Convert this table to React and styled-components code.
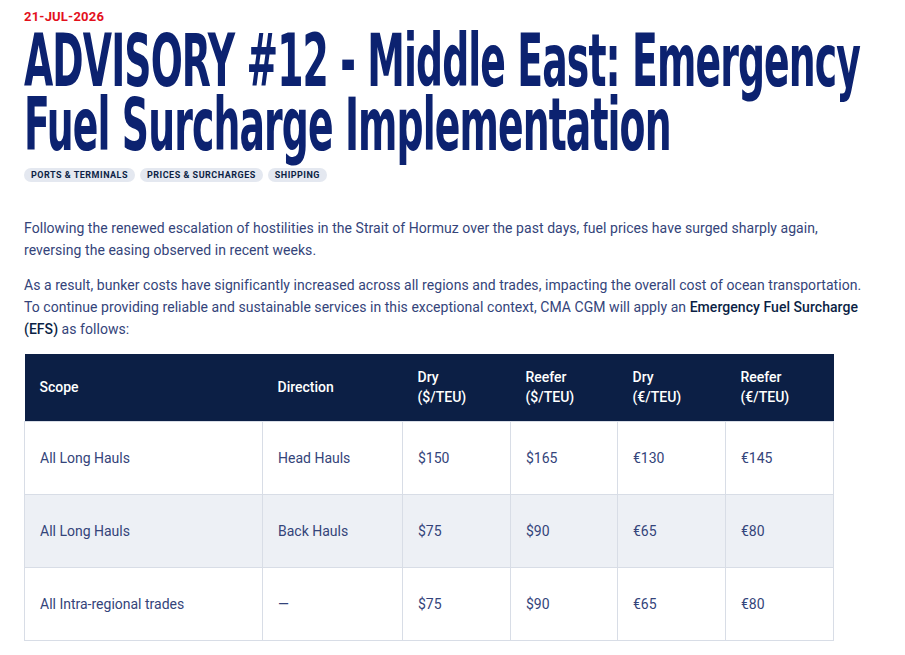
import React from "react";
import styled, { createGlobalStyle } from "styled-components";

const Global = createGlobalStyle`
  html, body { margin: 0; padding: 0; background: #fff; }
  body { font-family: Roboto, "Noto Sans", sans-serif; }
`;

const Page = styled.main`
  padding: 9px 35px 16px 24px;
  box-sizing: border-box;
  width: 905px;
`;

const DateLine = styled.div`
  color: #e3101c;
  font-family: Roboto, sans-serif;
  font-weight: 700;
  font-size: 13px;
  line-height: 16px;
  letter-spacing: 0.2px;
`;

const Title = styled.h1`
  margin: 6px -30px 64px 0;
  color: #0c2270;
  font-family: "DejaVu Sans Condensed", "Liberation Sans", sans-serif;
  font-weight: 700;
  font-size: 42px;
  line-height: 36.6px;
  letter-spacing: -0.9px;
  transform: scaleY(1.72);
  transform-origin: top left;
`;

const Tags = styled.div`
  display: flex;
  gap: 5px;
`;

const Tag = styled.span`
  display: inline-block;
  background: #e4e8f0;
  color: #0c1f45;
  font-family: Roboto, sans-serif;
  font-weight: 700;
  font-size: 9px;
  line-height: 14px;
  padding: 0 7px;
  border-radius: 8px;
  letter-spacing: 0.5px;
`;

const Body = styled.div`
  margin-top: 35px;
`;

const Para = styled.p`
  margin: 0 0 13px;
  color: #34447a;
  font-family: Roboto, sans-serif;
  font-size: 14px;
  line-height: 22px;
  letter-spacing: 0.05px;
`;

const Strong = styled.strong`
  color: #0c1f45;
  font-weight: 500;
`;

const Table = styled.table`
  width: 809px;
  border-collapse: collapse;
  margin-top: 14px;
  table-layout: fixed;
  font-family: Roboto, sans-serif;
  font-size: 14px;
`;

const Th = styled.th`
  background: #0c1f45;
  color: #fff;
  font-weight: 500;
  text-align: left;
  vertical-align: middle;
  padding: 0 15px;
  height: 67px;
  line-height: 20px;
  box-sizing: border-box;
`;

const Tr = styled.tr`
  background: ${(p) => (p.$alt ? "#edf0f5" : "#fff")};
`;

const Td = styled.td`
  border: 1px solid #d8dde6;
  color: #34447a;
  padding: 0 15px;
  height: 73px;
  vertical-align: middle;
  line-height: 20px;
  box-sizing: border-box;
`;

const cols = [238, 140, 108, 107, 108, 108];
const headers = [
  ["Scope"],
  ["Direction"],
  ["Dry", "($/TEU)"],
  ["Reefer", "($/TEU)"],
  ["Dry", "(€/TEU)"],
  ["Reefer", "(€/TEU)"],
];
const rows = [
  ["All Long Hauls", "Head Hauls", "$150", "$165", "€130", "€145"],
  ["All Long Hauls", "Back Hauls", "$75", "$90", "€65", "€80"],
  ["All Intra-regional trades", "—", "$75", "$90", "€65", "€80"],
];

export default function App() {
  return (
    <>
      <Global />
      <Page>
        <DateLine>21-JUL-2026</DateLine>
        <Title>ADVISORY #12 - Middle East: Emergency Fuel Surcharge Implementation</Title>
        <Tags>
          <Tag>PORTS &amp; TERMINALS</Tag>
          <Tag>PRICES &amp; SURCHARGES</Tag>
          <Tag>SHIPPING</Tag>
        </Tags>
        <Body>
          <Para>
            Following the renewed escalation of hostilities in the Strait of Hormuz over the past days, fuel prices have surged sharply again, reversing the easing observed in recent weeks.
          </Para>
          <Para>
            As a result, bunker costs have significantly increased across all regions and trades, impacting the overall cost of ocean transportation. To continue providing reliable and sustainable services in this exceptional context, CMA CGM will apply an <Strong>Emergency Fuel Surcharge (EFS)</Strong> as follows:
          </Para>
          <Table>
            <colgroup>
              {cols.map((w, i) => (
                <col key={i} style={{ width: w }} />
              ))}
            </colgroup>
            <thead>
              <tr>
                {headers.map((h, i) => (
                  <Th key={i}>
                    {h.map((l, j) => (
                      <React.Fragment key={j}>
                        {j > 0 && <br />}
                        {l}
                      </React.Fragment>
                    ))}
                  </Th>
                ))}
              </tr>
            </thead>
            <tbody>
              {rows.map((r, i) => (
                <Tr key={i} $alt={i === 1}>
                  {r.map((c, j) => (
                    <Td key={j}>{c}</Td>
                  ))}
                </Tr>
              ))}
            </tbody>
          </Table>
        </Body>
      </Page>
    </>
  );
}
